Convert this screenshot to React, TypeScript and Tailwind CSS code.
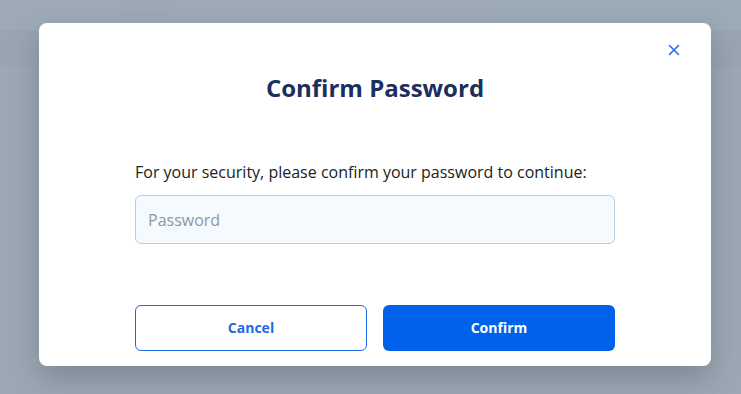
export default function App() {
  return (
    <div className="relative h-[394px] w-[741px] overflow-hidden bg-[#9ca9b4] font-['Open_Sans',sans-serif]">
      {/* faint page behind the overlay */}
      <div className="absolute inset-x-0 top-0 flex h-[30px]">
        <div className="w-[120px] bg-[#9eabb6]" />
        <div className="w-[50px] bg-[#9daab5]" />
        <div className="w-[330px] bg-[#9eabb6]" />
        <div className="flex-1 bg-[#9dabb6]" />
      </div>
      <div className="absolute left-0 top-[30px] h-[36px] w-[741px] bg-[#99a6b1]" />

      <div className="relative ml-[39px] mt-[23px] w-[672px] rounded-lg bg-white px-24 pb-[15px] pt-[49px] shadow-[0_12px_30px_rgba(60,75,90,0.35)]">
        <button className="absolute right-[31px] top-[21px] flex h-3 w-3 items-center justify-center text-[#1f6fe8]">
          <svg width="12" height="12" viewBox="0 0 12 12" fill="none" stroke="currentColor" strokeWidth="1.6" strokeLinecap="round">
            <path d="M1.5 1.5l9 9M10.5 1.5l-9 9" />
          </svg>
        </button>

        <h2 className="text-center text-2xl font-bold leading-8 text-[#1c2e5e]">Confirm Password</h2>

        <p className="mt-14 text-base leading-6 text-[#222]">
          For your security, please confirm your password to continue:
        </p>

        <input
          type="password"
          placeholder="Password"
          className="mt-[11px] h-[49px] w-full rounded-md border border-[#b8cee3] bg-[#f5faff] px-3 text-base text-[#222] placeholder:text-[#8d979f] outline-none"
        />

        <div className="mt-[61px] grid grid-cols-2 gap-4">
          <button className="h-[46px] rounded-md border border-[#1a68ea] bg-white text-sm font-bold text-[#1c6be6]">
            Cancel
          </button>
          <button className="h-[46px] rounded-md bg-[#0062eb] text-sm font-bold text-white">Confirm</button>
        </div>
      </div>
    </div>
  );
}
